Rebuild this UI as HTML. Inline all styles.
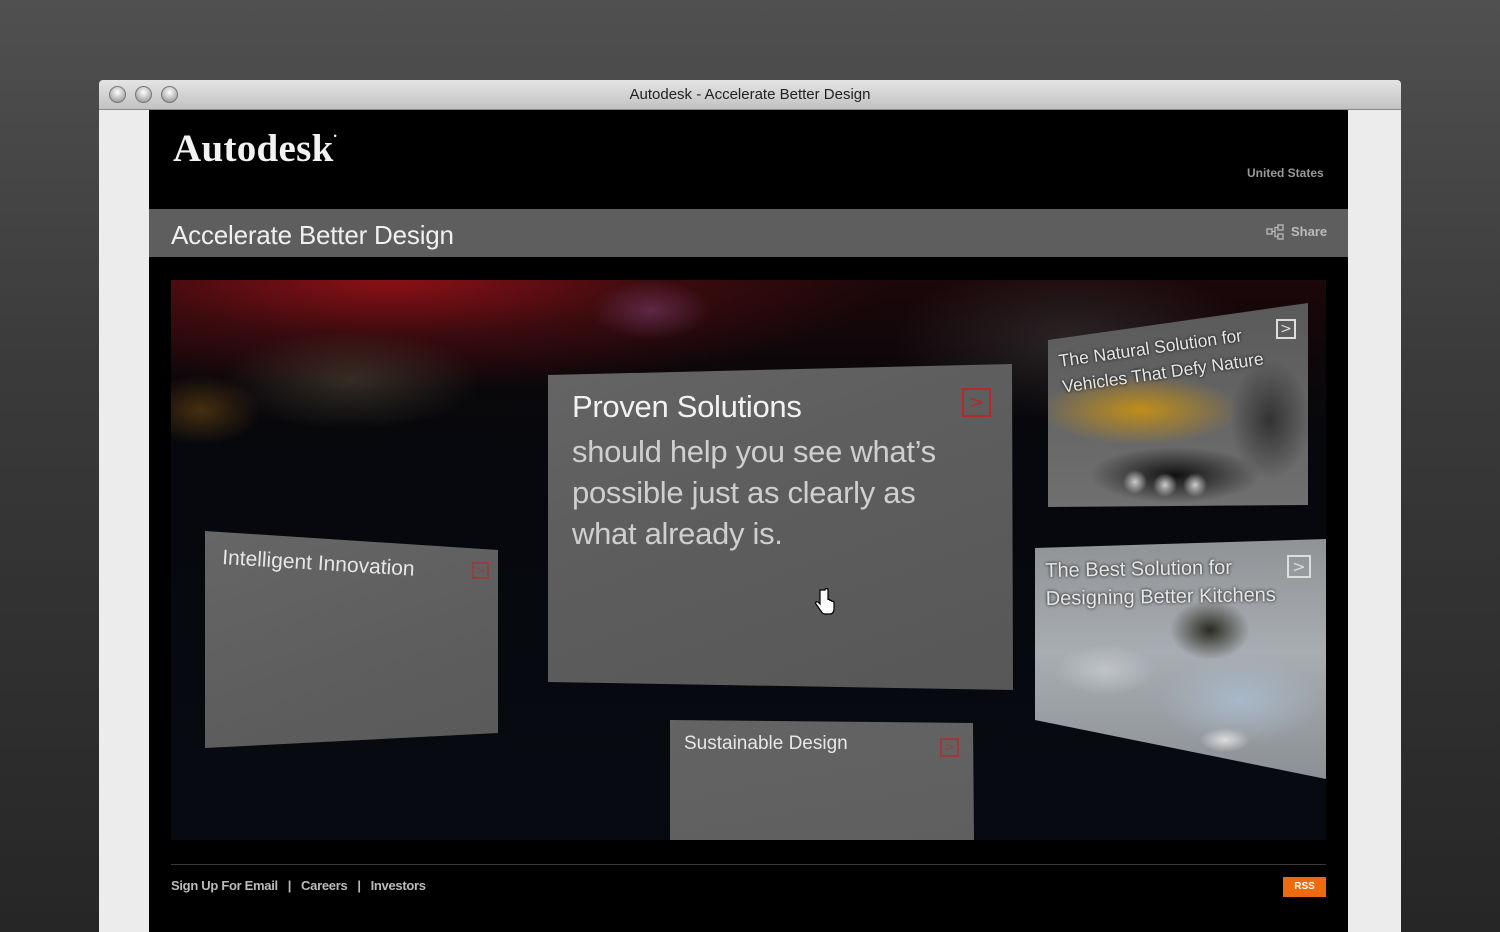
<!DOCTYPE html>
<html><head><style>
*{margin:0;padding:0;box-sizing:border-box}
body{width:1500px;height:932px;overflow:hidden;position:relative;background:linear-gradient(#505050,#3a3a3a 40%,#262626);font-family:"Liberation Sans",sans-serif}
.a{position:absolute}
.p{position:absolute;left:0;top:0;width:1500px;height:932px}
.t{position:absolute;color:#e6e6e6;font-family:"Liberation Sans",sans-serif;white-space:nowrap;transform-origin:0 0}
.arr{position:absolute;border:2px solid #ddd;color:#ddd;font-size:14px;line-height:16px;text-align:center;font-family:"DejaVu Sans",sans-serif}
.red{border-color:#b8282a;color:#b8282a}
</style></head><body>
<div class="a" style="left:99px;top:80px;width:1302px;height:30px;background:linear-gradient(#e4e4e4,#c2c2c2);border-radius:4px 4px 0 0;border-bottom:1px solid #888"></div>
<div class="a" style="left:109px;top:86px;width:17px;height:17px;border-radius:50%;background:radial-gradient(circle at 50% 35%,#fff,#aaa 70%,#888);border:1px solid #777"></div>
<div class="a" style="left:135px;top:86px;width:17px;height:17px;border-radius:50%;background:radial-gradient(circle at 50% 35%,#fff,#aaa 70%,#888);border:1px solid #777"></div>
<div class="a" style="left:161px;top:86px;width:17px;height:17px;border-radius:50%;background:radial-gradient(circle at 50% 35%,#fff,#aaa 70%,#888);border:1px solid #777"></div>
<div class="a" style="left:0;width:1500px;top:86px;text-align:center;font-size:15px;color:#222">Autodesk - Accelerate Better Design</div>
<div class="a" style="left:99px;top:110px;width:1302px;height:822px;background:#ececec"></div>
<div class="a" style="left:149px;top:110px;width:1199px;height:822px;background:#000"></div>
<div class="a" style="left:173px;top:126px;font-family:'Liberation Serif',serif;font-weight:bold;font-size:39px;color:#f2f2f2;letter-spacing:.3px">Autodesk<span style="font-size:9px;vertical-align:22px">•</span></div>
<div class="a" style="left:1247px;top:166px;font-size:12px;font-weight:bold;color:#999">United States</div>
<div class="a" style="left:149px;top:209px;width:1199px;height:48px;background:#5e5e5e"></div>
<div class="a" style="left:171px;top:220px;font-size:26px;color:#f0f0f0;letter-spacing:-.2px">Accelerate Better Design</div>
<svg class="a" style="left:1266px;top:224px" width="22" height="16"><g fill="none" stroke="#bbb" stroke-width="1.3"><rect x="1" y="5" width="5" height="5"/><rect x="12" y="1" width="5" height="5"/><rect x="12" y="10" width="5" height="5"/><path d="M6 7.5H9V3.5H12M9 7.5V12.5H12"/></g></svg>
<div class="a" style="left:1291px;top:224px;font-size:13px;font-weight:bold;color:#bbb">Share</div>
<div class="a" style="left:171px;top:280px;width:1155px;height:560px;background:
radial-gradient(ellipse 130px 50px at 180px 100px,rgba(90,80,60,.5),transparent),
radial-gradient(ellipse 60px 30px at 480px 30px,rgba(130,70,120,.5),transparent),
radial-gradient(ellipse 60px 35px at 30px 130px,rgba(130,85,20,.5),transparent),
radial-gradient(ellipse 180px 80px at 900px 60px,rgba(70,70,70,.45),transparent),
radial-gradient(ellipse 500px 110px at 220px 0,rgba(150,18,24,.9),rgba(100,15,20,.5) 50%,transparent),
linear-gradient(#1c0709 0,#0c070a 90px,#06080d 170px,#070a10)"></div>
<!-- panels -->
<div class="p" style="clip-path:polygon(205px 531px,498px 550px,498px 733px,205px 748px);background:linear-gradient(160deg,#808080 0%,#5d5d5d 55%,#4a4a4a 100%)"></div>
<div class="p" style="clip-path:polygon(548px 375px,1012px 364px,1013px 690px,548px 682px);background:linear-gradient(160deg,#7a7a7a 0%,#5e5e5e 50%,#4e4e4e 100%)"></div>
<div class="p" style="clip-path:polygon(670px 720px,973px 723px,974px 840px,670px 840px);background:linear-gradient(170deg,#7a7a7a,#5a5a5a)"></div>
<div class="p" style="clip-path:polygon(1048px 340px,1308px 303px,1308px 505px,1048px 507px);background:
radial-gradient(ellipse 12px 12px at 1135px 482px,#ccc,transparent),
radial-gradient(ellipse 12px 12px at 1165px 485px,#ccc,transparent),
radial-gradient(ellipse 12px 12px at 1195px 485px,#ccc,transparent),
radial-gradient(ellipse 85px 28px at 1175px 475px,#111,transparent),
radial-gradient(ellipse 100px 35px at 1140px 410px,#c08d18,transparent),
radial-gradient(ellipse 40px 60px at 1270px 420px,#333,transparent),
linear-gradient(#3a3a3a,#666 45%,#a0a0a0)"></div>
<div class="p" style="clip-path:polygon(1035px 548px,1326px 539px,1326px 779px,1035px 720px);background:
radial-gradient(ellipse 25px 12px at 1225px 740px,#ddd,transparent),
radial-gradient(ellipse 80px 45px at 1240px 700px,#a8b8c8,transparent),
radial-gradient(ellipse 50px 25px at 1105px 670px,#c0c4c8,transparent),
radial-gradient(ellipse 40px 30px at 1210px 630px,#2a2a20,transparent),
linear-gradient(#1e1e1e,#2a2a2a 25%,#777 45%,#a8adb2 70%,#6a6d70)"></div>
<div class="t" style="left:223px;top:546px;font-size:21px;transform:rotate(3.5deg)">Intelligent Innovation</div>
<div class="arr red" style="left:472px;top:562px;width:17px;height:17px;font-size:11px;line-height:13px;opacity:.6">&gt;</div>
<div class="t" style="left:572px;top:389px;font-size:31px;color:#f2f2f2;letter-spacing:-.3px">Proven Solutions</div>
<div class="t" style="left:572px;top:431px;font-size:31px;line-height:41px;color:#cfcfcf;letter-spacing:-.3px">should help you see what’s<br>possible just as clearly as<br>what already is.</div>
<div class="arr red" style="left:962px;top:388px;width:29px;height:29px;line-height:25px;font-size:18px">&gt;</div>
<div class="t" style="left:684px;top:733px;font-size:19px">Sustainable Design</div>
<div class="arr red" style="left:940px;top:738px;width:19px;height:19px;font-size:12px;line-height:15px;opacity:.7">&gt;</div>
<div class="t" style="left:1057px;top:348px;font-size:17.5px;line-height:26px;transform:rotate(-8deg);text-shadow:0 0 3px #000">The Natural Solution for<br>Vehicles That Defy Nature</div>
<div class="arr" style="left:1276px;top:319px;width:20px;height:20px;line-height:16px">&gt;</div>
<div class="t" style="left:1045px;top:557px;font-size:20px;line-height:28px;transform:rotate(-1deg);text-shadow:0 0 3px #000">The Best Solution for<br>Designing Better Kitchens</div>
<div class="arr" style="left:1287px;top:555px;width:24px;height:23px;line-height:19px;font-size:16px">&gt;</div>
<svg class="a" style="left:814px;top:588px" width="22" height="28"><path d="M6 2v14l-2-2c-2-1-3 1-2 2l5 7c1 2 2 3 4 3h5c3 0 4-3 4-5v-6c0-2-2-2-2-1 0-2-2-2-2-1 0-2-2-2-2-1V2c0-2-3-2-3 0z" fill="#fff" stroke="#000" stroke-width="1.2"/></svg>
<!-- footer -->
<div class="a" style="left:171px;top:864px;width:1155px;height:1px;background:#3a3a3a"></div>
<div class="a" style="left:171px;top:878px;font-size:13px;font-weight:bold;color:#bbb;letter-spacing:-.3px">Sign Up For Email &nbsp;&nbsp;|&nbsp;&nbsp; Careers &nbsp;&nbsp;|&nbsp;&nbsp; Investors</div>
<div class="a" style="left:1283px;top:877px;width:43px;height:20px;background:#ee6a10;color:#fff;font-size:10px;font-weight:bold;text-align:center;line-height:20px">RSS</div>
</body></html>
